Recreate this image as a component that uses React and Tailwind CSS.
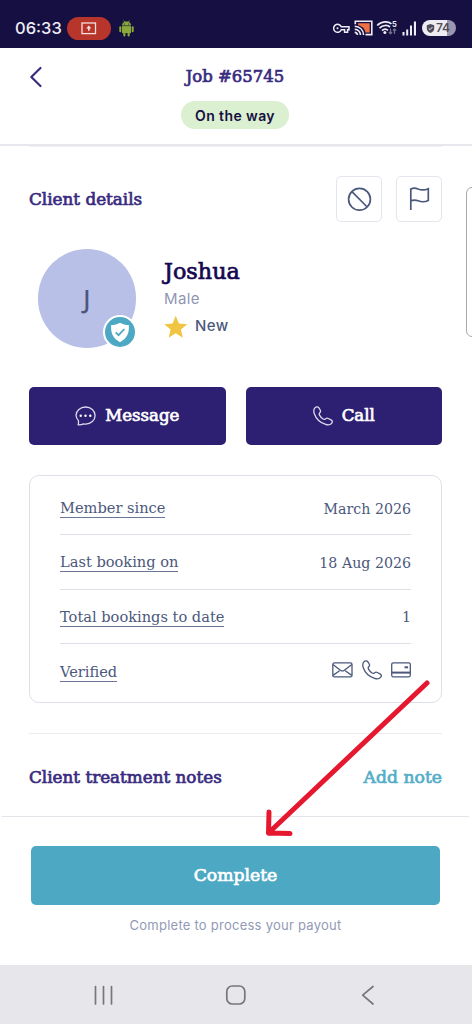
import React from "react";

const SLAB = "font-['DejaVu_Serif',serif]";
// regular cut thickened a little, the bold cut is too heavy for titles
const SLAB_TITLE = "font-['DejaVu_Serif',serif] font-normal [-webkit-text-stroke:0.7px_currentColor]";
const SANS = "font-['Inter',sans-serif]";

const PhoneIcon = ({ className }) => (
    <svg viewBox="0 0 20 20" fill="none" stroke="currentColor" strokeWidth="1.3" strokeLinejoin="round" className={className}>
        <path d="M2.2 1.6C3.3.6 5 .6 5.900 1.900L7.200 4c.6 1.100.4 2-.4 2.800-.7.7-.8 1.400-.3 2.300.9 1.600 2.100 2.900 3.600 3.900.9.6 1.500.5 2.300-.1.900-.7 1.900-.9 2.900-.4l2.700 1.300c1.400.7 1.700 2.100.8 3.300-1.400 1.800-3.600 2.300-6.200 1.300C6.900 16.500 3 12.600 1.300 7.700.500 5.300.700 2.900 2.200 1.600Z" />
    </svg>
);

const StatusBar = () => (
    <div className={`h-12 bg-[#160f41] flex items-center pt-2 pl-[15px] pr-4 text-[#eeedf5] ${SANS}`}>
        <span className="text-[16.500px] w-[52px] pt-px font-medium">06:33</span>
        <div className="w-11 h-[23px] rounded-full bg-[#b8352b] flex items-center justify-center">
            <svg width="16" height="13" viewBox="0 0 16 13" fill="none" stroke="#f6dedd" strokeWidth="1.3">
                <rect x="1" y="1" width="13.500" height="10.600" />
                <path d="M7.800 3.500 10.400 6.500H8.600V8.800H7V6.500H5.200Z" fill="#f6dedd" stroke="none" />
            </svg>
        </div>
        <svg className="ml-2" width="15" height="17" viewBox="0 0 15 17" fill="#8aa93a">
            <path d="M3 5.500C3.100 3.700 4 2.500 5.200 1.900L4.300.5l.5-.2 1 1.400c1-.4 2.300-.4 3.400 0l1-1.400.5.2-.9 1.400C11 2.500 11.900 3.700 12 5.500Z" />
            <path d="M3 6.100h9v7H3z" />
            <rect x="0.300" y="6.200" width="2" height="6" rx="1" />
            <rect x="12.700" y="6.200" width="2" height="6" rx="1" />
            <rect x="4.300" y="11" width="2.100" height="5.500" rx="1" />
            <rect x="8.600" y="11" width="2.100" height="5.500" rx="1" />
            <circle cx="5.500" cy="4" r="0.500" fill="#160f41" />
            <circle cx="9.500" cy="4" r="0.500" fill="#160f41" />
        </svg>

        <div className="ml-auto flex items-center">
            <svg width="17" height="11" viewBox="0 0 17 11" fill="none" stroke="currentColor" strokeWidth="1.500">
                <path d="M8.300 3.800H16v3h-1.400v2.500h-3V6.800H8.300A4 4 0 1 1 8.300 3.800Z" />
                <circle cx="4.500" cy="5.300" r="1" fill="currentColor" stroke="none" />
            </svg>
            <svg className="ml-1" width="19" height="16" viewBox="0 0 19 16" fill="none" stroke="currentColor" strokeWidth="1.600">
                <path d="M4 3.300H15.700V12.500H11.500C11 9 8 6 4 5.300Z" fill="#ee7045" stroke="none" />
                <path d="M1.300 4.200V1.300H17.800V14.600H11.500M.7 6.200C5.700 6.500 9.300 10 9.600 15M.7 9.300C4 9.600 6.200 11.800 6.500 15M.7 12.400C2.400 12.500 3.300 13.600 3.500 15" />
            </svg>
            <svg className="ml-[3px]" width="22" height="16" viewBox="0 0 22 16" fill="none" stroke="currentColor" strokeWidth="1.700">
                <path d="M1.200 5.500C5.500 1 12 .900 15.500 3.800M3.500 8.100C6.800 4.800 11.500 4.800 14 7M6 10.600C7.900 8.900 10.400 8.900 12 10.400" />
                <circle cx="8.900" cy="12.400" r="1.500" fill="currentColor" stroke="none" />
                <path d="M14.500 8.500v5M12.900 12l1.600 1.800 1.600-1.800M18.500 14V9M16.900 10.700l1.600-1.800 1.600 1.800" stroke="#77718f" strokeWidth="1.200" />
                <text x="16" y="6.500" fontSize="7.500" fontWeight="700" fill="currentColor" stroke="none">5</text>
            </svg>
            <svg className="ml-1" width="15" height="15" viewBox="0 0 15 15" fill="currentColor">
                <rect x="0.500" y="11" width="2" height="3.500" />
                <rect x="4.200" y="8.500" width="2" height="6" />
                <rect x="8" y="4.500" width="2" height="10" />
                <rect x="11.900" y="0.500" width="2.100" height="14" />
            </svg>
            <div className="ml-[5px] w-[34px] h-4 rounded-full bg-[linear-gradient(to_right,#ececf2_74%,#9b96b0_74%)] flex items-center pl-1 text-[#514e5c]">
                <svg width="9" height="9" viewBox="0 0 8 9" fill="currentColor">
                    <path d="M4 0 7.700 1.200V4.700C7.700 6.700 6 8.200 4 9 2 8.200.3 6.700.3 4.700V1.200Z" />
                    <path d="m2.200 4.400 1.300 1.300 2.400-2.600" fill="none" stroke="#ececf2" />
                </svg>
                <span className="ml-px text-[12px] leading-4 tracking-[-0.300px] font-semibold">74</span>
            </div>
        </div>
    </div>
);

const Header = () => (
    <header className="h-[98px] border-b-2 border-[#e8e7ee] relative flex flex-col items-center pr-[2px]">
        <svg className="absolute left-[29px] top-[18px]" width="14" height="22" viewBox="0 0 14 22" fill="none" stroke="#392b80" strokeWidth="2.200" strokeLinecap="round" strokeLinejoin="round">
            <path d="M11.500 2 2.300 11l9.200 9" />
        </svg>
        <h1 className={`mt-[17px] h-6 leading-6 text-[16.500px] text-[#392b80] ${SLAB_TITLE}`}>Job #65745</h1>
        <span className={`mt-3 w-[108px] h-7 leading-[29px] rounded-full bg-[#daf0d1] text-center text-[14px] tracking-[0.400px] font-semibold text-[#160f41] ${SANS}`}>
            On the way
        </span>
        {/* top rule of the scrolled list */}
        <div className="absolute left-[29px] right-[30px] top-[98px] h-px bg-[#f1f1f5]" />
    </header>
);

const IconButton = ({ children }) => (
    <button className="w-[46px] h-[46px] rounded-[5px] border-[1.500px] border-[#e5e5ee] flex items-center justify-center text-[#4b587c]">
        {children}
    </button>
);

const ClientDetails = () => (
    <section className="pt-[30px] pl-[29px] pr-[30px]">
        <div className="flex items-center h-[46px]">
            <h2 className={`flex-1 pt-px text-[16.800px] text-[#392b80] whitespace-nowrap ${SLAB_TITLE}`}>Client details</h2>
            <div className="flex gap-[14px]">
                <IconButton>
                    <svg width="26" height="26" viewBox="0 0 26 26" fill="none" stroke="currentColor" strokeWidth="1.700">
                        <circle cx="13.500" cy="13.300" r="10.900" />
                        <path d="m5.900 5.700 15.300 15.300" />
                    </svg>
                </IconButton>
                <IconButton>
                    <svg width="26" height="26" viewBox="0 0 26 26" fill="none" stroke="currentColor" strokeWidth="1.700">
                        <path d="M4.800 24V2.300M4.800 3.200C7.100 1.800 9.500 1.900 12 3c3.500 1.400 7 1.200 10.300-.3v11.700c-3.100 1.600-6.700 1.800-10.200.4-2.500-1-4.900-1-7.300.2" />
                    </svg>
                </IconButton>
            </div>
        </div>

        <div className="mt-[27px] ml-[9px] flex">
            <div className="relative w-[98px] h-[99px] rounded-full bg-[#b9c0e8] flex items-center justify-center text-[25px] leading-none font-medium text-[#4b587c] font-['Noto_Sans',sans-serif]">
                <span>J</span>
                <svg className="absolute left-[65px] top-[66px]" width="34" height="34" viewBox="0 0 34 34">
                    <circle cx="17" cy="17" r="16" fill="#4da8c4" stroke="#fff" strokeWidth="2" />
                    <path d="M17 7.800c2.800 1.600 5.600 2.200 8.800 2.300.7 7.600-1.500 13.400-8.800 17.100C9.700 23.500 7.500 17.700 8.200 10.100c3.200-.1 6-.7 8.800-2.300Z" fill="#fff" />
                    <path d="m12.700 17.300 2.900 2.800 5.700-6.100" fill="none" stroke="#4da8c4" strokeWidth="1.800" />
                </svg>
            </div>
            <div className="ml-7 pt-[9px]">
                <h3 className={`h-[27px] leading-[27px] text-[22.300px] text-[#150650] ${SLAB_TITLE}`}>Joshua</h3>
                <p className={`h-7 leading-7 text-[15px] tracking-[0.400px] text-[#8f96b3] ${SANS}`}>Male</p>
                <div className="flex items-center h-[27px]">
                    <svg width="24" height="24" viewBox="0 0 24 24" fill="#f0c541">
                        <path d="m11.700.8 3.200 7.700 8.400.7-6.400 5.400 2 8.200-7.200-4.500-7.100 4.500 2-8.200L.3 9.200l8.300-.7Z" />
                    </svg>
                    <span className={`ml-[7px] text-[15px] tracking-[0.400px] font-medium text-[#4b587c] ${SANS}`}>New</span>
                </div>
            </div>
        </div>

        <div className={`mt-[39px] flex gap-5 text-white text-[16.600px] ${SLAB_TITLE}`}>
            <button className="flex-1 h-[58px] rounded-[5px] bg-[#2d1f72] flex items-center justify-center gap-[9px]">
                <svg width="21" height="20" viewBox="0 0 21 20" fill="none" stroke="#dcd9ee" strokeWidth="1.300" strokeLinejoin="round">
                    <path d="M3.400 14.600A8.600 8.600 0 0 1 1 9.300C1 4.600 5.300 1 10.600 1s9.500 3.600 9.500 8.400-4.200 8.700-9.500 8.700c-.8 0-1.500-.1-2.200-.2-1.500.8-3.200 1-5.300.9.500-1.200.600-2.600.3-4.200Z" />
                    <g fill="#fff" stroke="none">
                        <circle cx="5.700" cy="9.800" r="1.200" />
                        <circle cx="10.500" cy="9.800" r="1.200" />
                        <circle cx="15.300" cy="9.800" r="1.200" />
                    </g>
                </svg>
                <span className="pt-px">Message</span>
            </button>
            <button className="flex-1 h-[58px] rounded-[5px] bg-[#2d1f72] flex items-center justify-center gap-[9px]">
                <PhoneIcon className="size-5 text-[#dcd9ee]" />
                <span className="pt-px">Call</span>
            </button>
        </div>
    </section>
);

const rows = [
    { label: "Member since", value: "March 2026" },
    { label: "Last booking on", value: "18 Aug 2026" },
    { label: "Total bookings to date", value: "1" },
    { label: "Verified", icons: true },
];

const VerifiedIcons = () => (
    <div className="flex items-center gap-[9px] pb-[3px] text-[#4b587c]">
        <svg width="21" height="16" viewBox="0 0 21 16" fill="none" stroke="currentColor" strokeWidth="1.300">
            <rect x="0.800" y="0.900" width="19.200" height="14" rx="1.500" />
            <path d="m1 2.500 7.400 5.700c1.400 1 2.700 1 4 0l7.400-5.700M1 13.400l6.600-4.600M19.800 13.400l-6.600-4.600" />
        </svg>
        <PhoneIcon className="w-5 h-5" />
        <svg width="20" height="16" viewBox="0 0 20 16" fill="none" stroke="currentColor" strokeWidth="1.300">
            <rect x="0.700" y="0.800" width="18.600" height="14" rx="1.500" />
            <path d="M1 10.600h18" strokeWidth="2" />
            <path d="M13.500 5.300h3.600" strokeWidth="2" />
        </svg>
    </div>
);

const StatsCard = () => (
    <div className={`mt-[30px] ml-[29px] mr-[30px] h-[228px] rounded-[10px] border border-[#dfdfe8] px-[30px] pt-[5px] text-[#4b587c] ${SLAB}`}>
        {rows.map((row, i) => (
            <div
                key={row.label}
                className={`flex items-center justify-between h-[54.300px] ${i < rows.length - 1 ? "border-b border-[#dfdfe8]" : ""}`}
            >
                <span className="mt-px text-[14.600px] leading-[19px] border-b-[1.500px] border-[#6b7595]">{row.label}</span>
                {row.icons ? <VerifiedIcons /> : <span className="pt-[3px] text-[14.200px]">{row.value}</span>}
            </div>
        ))}
    </div>
);

const Footer = () => (
    <footer className="ml-[2px] mr-[3px] border-t border-[#e3e3ea] h-[149px] pt-[29px] flex flex-col items-center">
        <button className={`w-[409px] h-[59px] pt-px rounded-[5px] bg-[#4da8c4] text-white text-[17.200px] ${SLAB_TITLE}`}>
            Complete
        </button>
        <p className={`mt-[10px] leading-5 text-[13px] tracking-[0.250px] text-[#929ab5] ${SANS}`}>Complete to process your payout</p>
    </footer>
);

const NavBar = () => (
    <nav className="h-[59px] bg-[#e7e6eb] text-[#77767b]">
        <svg width="472" height="59" viewBox="0 0 472 59" fill="none" stroke="currentColor" strokeWidth="1.700" strokeLinecap="round" strokeLinejoin="round">
            <path d="M95.500 21.500v17.500M103.500 21.500v17.500M111.500 21.500v17.500" />
            <rect x="226.800" y="21" width="18" height="18" rx="5.500" />
            <path d="M373 21.500 362.700 30.200 373 39" />
        </svg>
    </nav>
);

export default function App() {
    return (
        <div className="relative w-[472px] h-[1024px] bg-white overflow-hidden">
            <StatusBar />
            <Header />
            <ClientDetails />
            <StatsCard />
            <div className="mt-[30px] ml-[29px] mr-[30px] h-[83px] border-t border-[#ebebf0] flex items-center justify-between pt-[5px]">
                <h2 className={`text-[16.800px] text-[#392b80] ${SLAB_TITLE}`}>Client treatment notes</h2>
                <button className={`text-[17.200px] text-[#54adc7] ${SLAB_TITLE}`}>Add note</button>
            </div>
            <Footer />
            <NavBar />

            {/* edge panel handle */}
            <div className="absolute left-[466px] top-[187px] w-4 h-[150px] rounded-[6px] border border-[#aaa9ad]" />

            {/* pointer to the complete button */}
            <svg className="absolute left-0 top-0 pointer-events-none" width="472" height="1024" fill="none" stroke="#e5182f" strokeWidth="5" strokeLinecap="round" strokeLinejoin="round">
                <path d="M427 683 268.500 833M269 812l-.5 21 21.500.6" />
            </svg>
        </div>
    );
}
